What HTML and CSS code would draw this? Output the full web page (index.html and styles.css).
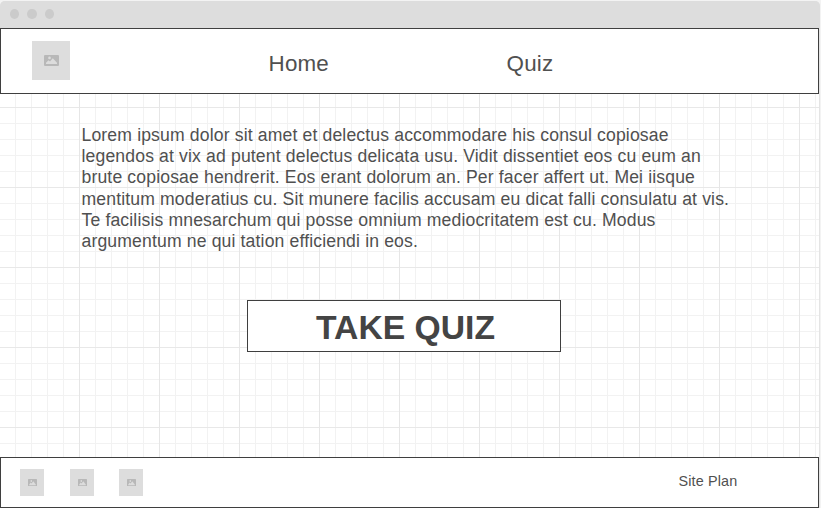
FILE: index.html
```html
<!DOCTYPE html>
<html lang="en">
<head>
<meta charset="utf-8">
<title>Quiz</title>
<link rel="stylesheet" href="styles.css">
</head>
<body>
<svg class="defs" width="0" height="0">
  <symbol id="picture" viewBox="0 0 15 11" preserveAspectRatio="none">
    <rect width="15" height="11" rx="1" fill="#b8b8b8"/>
    <circle cx="5.5" cy="2.9" r="1.3" fill="#dcdcdc"/>
    <path d="M2 9V7.8L4.5 5.2L6 6.5L8.8 3.2L13 7.8V9Z" fill="#dcdcdc"/>
  </symbol>
</svg>
<div class="window">
  <div class="titlebar"><i class="dot"></i><i class="dot"></i><i class="dot"></i></div>
  <header class="header">
    <div class="logo"><svg width="15" height="11"><use href="#picture"/></svg></div>
    <nav class="nav"><a class="home">Home</a><a>Quiz</a></nav>
  </header>
  <main class="content">
    <p class="intro">Lorem ipsum dolor sit amet et delectus accommodare his consul copiosae<br>legendos at vix ad putent delectus delicata usu. Vidit dissentiet eos cu eum an<br>brute copiosae hendrerit. Eos erant dolorum an. Per facer affert ut. Mei iisque<br>mentitum moderatius cu. Sit munere facilis accusam eu dicat falli consulatu at vis.<br>Te facilisis mnesarchum qui posse omnium mediocritatem est cu. Modus<br>argumentum ne qui tation efficiendi in eos.</p>
    <button class="take">TAKE QUIZ</button>
  </main>
  <footer class="footer">
    <div class="socials">
      <div class="thumb"><svg width="9" height="7.6"><use href="#picture"/></svg></div>
      <div class="thumb"><svg width="9" height="7.6"><use href="#picture"/></svg></div>
      <div class="thumb"><svg width="9" height="7.6"><use href="#picture"/></svg></div>
    </div>
    <a class="plan">Site Plan</a>
  </footer>
</div>
</body>
</html>
```
FILE: styles.css
```css
* { box-sizing: border-box; }
body {
  margin: 0;
  height: 508px;
  overflow: hidden;
  background: #f3f3f3;
  font-family: "Liberation Sans", Arial, sans-serif;
  color: #505050;
}
.defs { display: block; }
.window {
  width: 820px;
  height: 507px;
  margin-top: 1px;
  padding-right: 1px;
  display: flex;
  flex-direction: column;
  background: #e4e4e4;
  border-radius: 5px 5px 0 0;
}
.titlebar {
  height: 27px;
  display: flex;
  gap: 8px;
  padding: 8px 0 0 9.7px;
  margin-right: -1px;
  background: #ddd;
  border-radius: 5px 5px 0 0;
}
.dot { width: 9.5px; height: 10px; border-radius: 50%; background: #cbcbcb; }
.header, .footer {
  display: flex;
  flex: none;
  background: #fff;
  border: 1px solid #3f3f3f;
}
.header { height: 66px; padding: 12px 0 0 31px; }
.logo, .thumb {
  display: flex;
  align-items: center;
  justify-content: center;
  background: #ddd;
}
.logo { width: 38px; height: 39px; }
.nav {
  display: flex;
  margin-left: 198.6px;
  padding-top: 10px;
  font-size: 22.4px;
  line-height: 26px;
  letter-spacing: .15px;
}
.home { width: 238px; }
.content {
  flex: 1;
  display: flex;
  flex-direction: column;
  padding: 31px 0 0 81.5px;
  background-color: #fff;
  background-image:
    linear-gradient(90deg, #e6e6e6 1px, transparent 1px),
    linear-gradient(#e8e8e8 1px, transparent 1px),
    linear-gradient(90deg, #f2f2f2 1px, transparent 1px),
    linear-gradient(#f2f2f2 1px, transparent 1px);
  background-size: 80px 80px, 80px 80px, 16px 16px, 16px 16px;
  background-position: 79px 0, 0 13px, 15px 0, 0 13px;
}
.intro {
  margin: 0;
  white-space: nowrap;
  font-size: 17.6px;
  line-height: 21.2px;
  letter-spacing: .145px;
}
.take {
  width: 314px;
  height: 52px;
  margin: 48px 0 0 165.5px;
  padding: 3px 0 0 3px;
  border: 1px solid #3f3f3f;
  background: #fff;
  color: #444;
  font: bold 33.7px "Liberation Sans", Arial, sans-serif;
}
.footer {
  height: 51px;
  justify-content: space-between;
  padding: 11px 80.6px 0 19px;
}
.socials { display: flex; }
.thumb { width: 24px; height: 27px; margin-right: 26px; }
.thumb + .thumb { margin-right: 25px; }
.plan { padding-top: 4px; font-size: 14.4px; line-height: 17px; letter-spacing: .15px; }
```
